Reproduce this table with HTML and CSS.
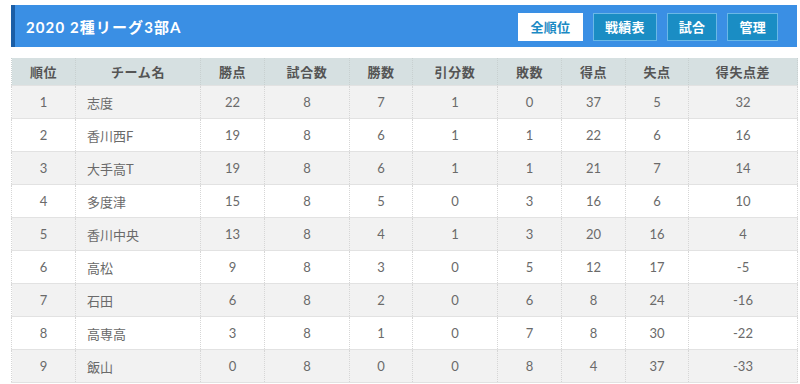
FILE: index.html
```html
<!DOCTYPE html>
<html lang="ja">
<head>
<meta charset="utf-8">
<link rel="stylesheet" href="styles.css">
</head>
<body>
<div class="page">
  <div class="bar">
    <h1 class="title">2020 2種リーグ3部A</h1>
    <div class="btns">
      <a class="btn btn-active">全順位</a>
      <a class="btn">戦績表</a>
      <a class="btn">試合</a>
      <a class="btn">管理</a>
    </div>
  </div>
  <table class="standings">
    <colgroup>
      <col class="c64"><col class="c125"><col class="c64"><col class="c85"><col class="c63"><col class="c85"><col class="c64"><col class="c64"><col class="c63"><col class="c109">
    </colgroup>
    <thead>
      <tr><th>順位</th><th>チーム名</th><th>勝点</th><th>試合数</th><th>勝数</th><th>引分数</th><th>敗数</th><th>得点</th><th>失点</th><th>得失点差</th></tr>
    </thead>
    <tbody>
      <tr><td>1</td><td class="team">志度</td><td>22</td><td>8</td><td>7</td><td>1</td><td>0</td><td>37</td><td>5</td><td>32</td></tr>
      <tr><td>2</td><td class="team">香川西F</td><td>19</td><td>8</td><td>6</td><td>1</td><td>1</td><td>22</td><td>6</td><td>16</td></tr>
      <tr><td>3</td><td class="team">大手高T</td><td>19</td><td>8</td><td>6</td><td>1</td><td>1</td><td>21</td><td>7</td><td>14</td></tr>
      <tr><td>4</td><td class="team">多度津</td><td>15</td><td>8</td><td>5</td><td>0</td><td>3</td><td>16</td><td>6</td><td>10</td></tr>
      <tr><td>5</td><td class="team">香川中央</td><td>13</td><td>8</td><td>4</td><td>1</td><td>3</td><td>20</td><td>16</td><td>4</td></tr>
      <tr><td>6</td><td class="team">高松</td><td>9</td><td>8</td><td>3</td><td>0</td><td>5</td><td>12</td><td>17</td><td>-5</td></tr>
      <tr><td>7</td><td class="team">石田</td><td>6</td><td>8</td><td>2</td><td>0</td><td>6</td><td>8</td><td>24</td><td>-16</td></tr>
      <tr><td>8</td><td class="team">高専高</td><td>3</td><td>8</td><td>1</td><td>0</td><td>7</td><td>8</td><td>30</td><td>-22</td></tr>
      <tr><td>9</td><td class="team">飯山</td><td>0</td><td>8</td><td>0</td><td>0</td><td>8</td><td>4</td><td>37</td><td>-33</td></tr>
    </tbody>
  </table>
</div>
</body>
</html>
```
FILE: styles.css
```css
html, body {
  margin: 0;
  padding: 0;
  background: #fff;
}
body {
  font-family: Lato, "Noto Sans CJK JP", sans-serif;
  color: #666;
}
.page {
  padding: 5px 3px 0 11px;
}
.bar {
  display: flex;
  align-items: center;
  justify-content: space-between;
  height: 42px;
  background: #3a8fe4;
  border-left: 4px solid #1b5ea6;
  padding: 0 19px 0 11px;
  box-sizing: border-box;
}
.title {
  margin: 0;
  font-size: 15px;
  font-weight: bold;
  color: #fff;
  font-family: Lato, "Noto Sans CJK JP", sans-serif;
  letter-spacing: 1.1px;
}
.btns {
  display: flex;
  gap: 10px;
  margin-top: 1px;
}
.btn {
  display: flex;
  align-items: center;
  justify-content: center;
  height: 28px;
  padding: 0 11px;
  box-sizing: border-box;
  background: #1a8dc4;
  border: 1px solid #6ab8e6;
  color: #fff;
  font-size: 13px;
  font-weight: bold;
  font-family: "Noto Sans CJK JP", sans-serif;
  letter-spacing: 0.3px;
}
.btn-active {
  background: #fff;
  border-color: #fff;
  color: #1b8ac4;
  width: 65px;
}
.standings {
  margin-top: 11px;
  width: 786px;
  border-collapse: collapse;
  table-layout: fixed;
  font-size: 13px;
}
.c64 { width: 64px; }
.c63 { width: 63px; }
.c85 { width: 85px; }
.c125 { width: 125px; }
.c109 { width: 109px; }
.standings th {
  height: 27px;
  padding: 0;
  background: #d6e0e1;
  color: #555;
  font-weight: bold;
  font-size: 13px;
  font-family: "Noto Sans CJK JP", sans-serif;
  text-align: center;
  border-left: 1px dotted #c8d0d0;
  border-right: 1px dotted #c8d0d0;
  letter-spacing: 0.6px;
}
.standings td {
  height: 32px;
  padding: 0;
  text-align: center;
  color: #6a6a6a;
  border: 1px dotted #d6d6d6;
  border-top: 1px solid #e2e2e2;
  border-bottom: 1px solid #e2e2e2;
}
.standings tbody tr:nth-child(odd) td {
  background: #f2f2f2;
}
.standings tbody tr:nth-child(even) td {
  background: #fff;
}
.standings td.team {
  text-align: left;
  padding-left: 11px;
  font-family: Lato, "Noto Sans CJK JP", sans-serif;
}
```
